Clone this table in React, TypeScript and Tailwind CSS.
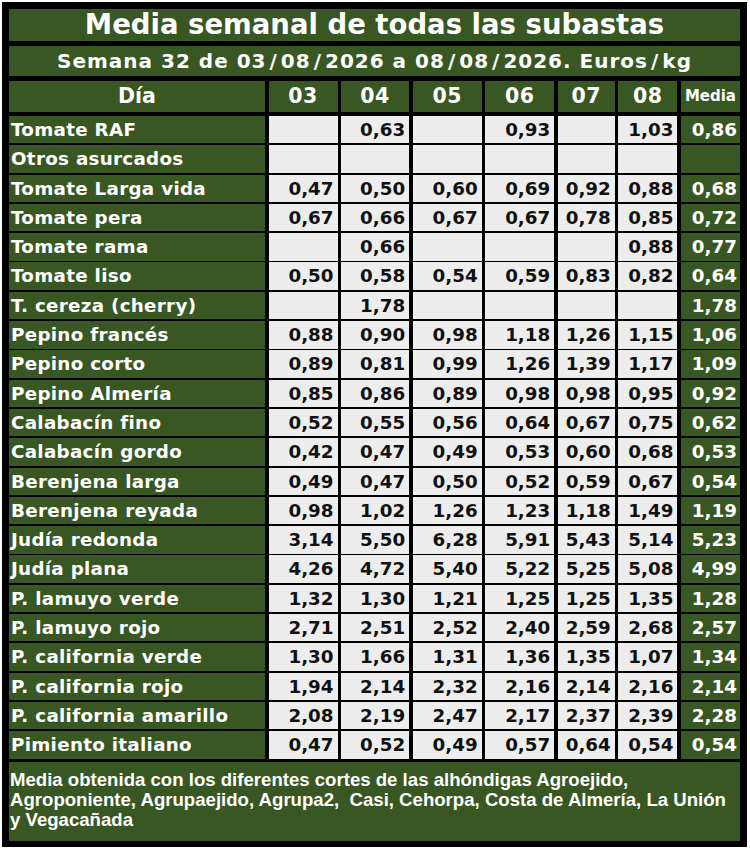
const rows: string[][] = [
  ["Tomate RAF", "", "0,63", "", "0,93", "", "1,03", "0,86"],
  ["Otros asurcados", "", "", "", "", "", "", ""],
  ["Tomate Larga vida", "0,47", "0,50", "0,60", "0,69", "0,92", "0,88", "0,68"],
  ["Tomate pera", "0,67", "0,66", "0,67", "0,67", "0,78", "0,85", "0,72"],
  ["Tomate rama", "", "0,66", "", "", "", "0,88", "0,77"],
  ["Tomate liso", "0,50", "0,58", "0,54", "0,59", "0,83", "0,82", "0,64"],
  ["T. cereza (cherry)", "", "1,78", "", "", "", "", "1,78"],
  ["Pepino francés", "0,88", "0,90", "0,98", "1,18", "1,26", "1,15", "1,06"],
  ["Pepino corto", "0,89", "0,81", "0,99", "1,26", "1,39", "1,17", "1,09"],
  ["Pepino Almería", "0,85", "0,86", "0,89", "0,98", "0,98", "0,95", "0,92"],
  ["Calabacín fino", "0,52", "0,55", "0,56", "0,64", "0,67", "0,75", "0,62"],
  ["Calabacín gordo", "0,42", "0,47", "0,49", "0,53", "0,60", "0,68", "0,53"],
  ["Berenjena larga", "0,49", "0,47", "0,50", "0,52", "0,59", "0,67", "0,54"],
  ["Berenjena reyada", "0,98", "1,02", "1,26", "1,23", "1,18", "1,49", "1,19"],
  ["Judía redonda", "3,14", "5,50", "6,28", "5,91", "5,43", "5,14", "5,23"],
  ["Judía plana", "4,26", "4,72", "5,40", "5,22", "5,25", "5,08", "4,99"],
  ["P. lamuyo verde", "1,32", "1,30", "1,21", "1,25", "1,25", "1,35", "1,28"],
  ["P. lamuyo rojo", "2,71", "2,51", "2,52", "2,40", "2,59", "2,68", "2,57"],
  ["P. california verde", "1,30", "1,66", "1,31", "1,36", "1,35", "1,07", "1,34"],
  ["P. california rojo", "1,94", "2,14", "2,32", "2,16", "2,14", "2,16", "2,14"],
  ["P. california amarillo", "2,08", "2,19", "2,47", "2,17", "2,37", "2,39", "2,28"],
  ["Pimiento italiano", "0,47", "0,52", "0,49", "0,57", "0,64", "0,54", "0,54"],
];

const days = ["03", "04", "05", "06", "07", "08"];

const cols = "grid grid-cols-[256px_69px_68px_69px_69px_57px_59px_59px] gap-x-[3.57px]";

const subtitle = "Semana 32 de 03/08/2026 a 08/08/2026. Euros/kg";

export default function App() {
  const parts = subtitle.split("/");
  return (
    <div className="bg-white p-[2px] w-[750px] h-[852px]" style={{ fontFamily: '"DejaVu Sans", Verdana, sans-serif' }}>
      <div className="bg-black w-[745px] pt-[7px] pb-[6px] px-[7px] flex flex-col gap-[5px]">
        <div className="bg-[#385723] h-[32px] flex items-center justify-center text-white font-bold text-[27.5px] whitespace-nowrap">
          Media semanal de todas las subastas
        </div>
        <div className="bg-[#385723] h-[30px] flex items-center justify-center text-white font-bold text-[20px] tracking-[1px] whitespace-nowrap">
          {parts.map((p, i) => (
            <span key={i}>
              {p}
              {i < parts.length - 1 && <span className="mx-[3px]">/</span>}
            </span>
          ))}
        </div>
        <div className={`${cols} h-[30px]`}>
          <div className="bg-[#385723] text-white font-bold text-[20.5px] flex items-center justify-center">Día</div>
          {days.map((d) => (
            <div key={d} className="bg-[#385723] text-white font-bold text-[20.5px] tracking-[0.5px] flex items-center justify-center">
              {d}
            </div>
          ))}
          <div className="bg-[#385723] text-white font-bold text-[15px] flex items-center justify-center">Media</div>
        </div>
        <div className="flex flex-col gap-[3.8px]">
          {rows.map((r) => (
            <div key={r[0]} className={`${cols} h-[25.5px]`}>
              <div className="bg-[#385723] text-white font-bold text-[18.3px] tracking-[0.3px] flex items-center pl-[2px] whitespace-nowrap">
                {r[0]}
              </div>
              {r.slice(1, 7).map((v, i) => (
                <div key={i} className="bg-[#ededed] text-[#111] font-bold text-[18.3px] flex items-center justify-end pr-[4px]">
                  {v}
                </div>
              ))}
              <div className="bg-[#385723] text-white font-bold text-[18.3px] flex items-center justify-end pr-[3px]">
                {r[7]}
              </div>
            </div>
          ))}
        </div>
        <div
          className="bg-[#385723] h-[79px] text-white font-bold text-[18.6px] leading-[20px] pl-[1px] pt-[8px] whitespace-nowrap"
          style={{ fontFamily: '"Liberation Sans", Arial, sans-serif' }}
        >
          Media obtenida con los diferentes cortes de las alhóndigas Agroejido,
          <br />
          Agroponiente, Agrupaejido, Agrupa2,&nbsp; Casi, Cehorpa, Costa de Almería, La Unión
          <br />
          y Vegacañada
        </div>
      </div>
    </div>
  );
}
